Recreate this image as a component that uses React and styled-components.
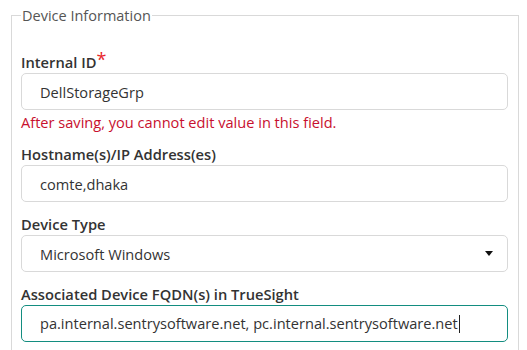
import styled, { createGlobalStyle } from "styled-components";

const GlobalStyle = createGlobalStyle`
  body {
    margin: 0;
    background: #fff;
    font-family: "Open Sans", "Liberation Sans", sans-serif;
  }
`;

const Fieldset = styled.fieldset`
  margin: 6px 0 0 11px;
  width: 508px;
  box-sizing: border-box;
  height: 360px;
  border: 1px solid #d9d9d9;
  padding: 27px 10px 0 9px;
  display: flex;
  flex-direction: column;
  gap: 12px;
`;

const Legend = styled.legend`
  padding: 0 1px;
  margin-left: 0;
  font-size: 14.5px;
  color: #555;
  line-height: 19px;
`;

const Group = styled.div`
  display: flex;
  flex-direction: column;
`;

const Label = styled.label`
  font-size: 14.7px;
  font-weight: 600;
  color: #333;
  line-height: 20px;
  margin-bottom: 1px;
`;

const Required = styled.span`
  color: #e8262c;
  font-size: 18px;
  font-weight: 400;
  line-height: 10px;
  position: relative;
  top: -2px;
`;

const Box = styled.div`
  height: 37px;
  box-sizing: border-box;
  border: 1px solid ${(p) => (p.$focused ? "#138d80" : "#d9d9d9")};
  border-radius: 5px;
  padding: 0 14px 0 18px;
  display: flex;
  align-items: center;
  font-size: 14.6px;
  color: #333;
  background: #fff;
`;

const Value = styled.span`
  flex: 1;
  white-space: nowrap;
`;

const Caret = styled.span`
  display: inline-block;
  width: 1px;
  height: 18px;
  background: #222;
  vertical-align: middle;
  margin-left: 1px;
  position: relative;
  top: -1px;
`;

const Arrow = styled.span`
  width: 0;
  height: 0;
  border-left: 4px solid transparent;
  border-right: 4px solid transparent;
  border-top: 5px solid #111;
`;

const ErrorText = styled.div`
  color: #c8102e;
  font-size: 14.6px;
  line-height: 20px;
  margin-top: 2px;
`;

export default function App() {
  return (
    <>
      <GlobalStyle />
      <Fieldset>
        <Legend>Device Information</Legend>
        <Group>
          <Label>
            Internal ID<Required>*</Required>
          </Label>
          <Box>
            <Value>DellStorageGrp</Value>
          </Box>
          <ErrorText>After saving, you cannot edit value in this field.</ErrorText>
        </Group>
        <Group>
          <Label>Hostname(s)/IP Address(es)</Label>
          <Box>
            <Value>comte,dhaka</Value>
          </Box>
        </Group>
        <Group>
          <Label>Device Type</Label>
          <Box>
            <Value>Microsoft Windows</Value>
            <Arrow />
          </Box>
        </Group>
        <Group>
          <Label>Associated Device FQDN(s) in TrueSight</Label>
          <Box $focused>
            <Value>
              pa.internal.sentrysoftware.net, pc.internal.sentrysoftware.net
              <Caret />
            </Value>
          </Box>
        </Group>
      </Fieldset>
    </>
  );
}
